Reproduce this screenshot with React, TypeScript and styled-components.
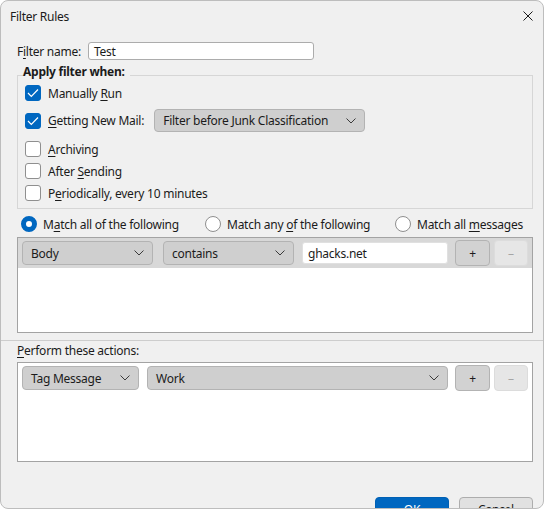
import React from 'react';
import styled, { createGlobalStyle } from 'styled-components';

const GlobalStyle = createGlobalStyle`
  html, body {
    margin: 0;
    padding: 0;
    background: #ffffff;
  }
  body {
    font-family: "Noto Sans", "Open Sans", sans-serif;
    font-size: 12px;
    letter-spacing: -0.25px;
    color: #1b1b1b;
  }
  * {
    box-sizing: border-box;
  }
`;

const Window = styled.div`
  width: 544px;
  height: 509px;
  border: 1px solid #bdbdbd;
  border-radius: 8px;
  background: #f0f0f0;
  overflow: hidden;
  display: flex;
  flex-direction: column;
`;

const TitleBar = styled.div`
  height: 30px;
  flex: none;
  display: flex;
  align-items: center;
  justify-content: space-between;
  padding: 0 10px 0 9px;
`;

const Pane = styled.div<{ $top: number; $bottom?: number }>`
  padding: ${(p) => p.$top}px 10px ${(p) => p.$bottom ?? 0}px 16px;
  display: flex;
  flex-direction: column;
`;

const Key = styled.span`
  text-decoration: underline;
  text-underline-offset: 2px;
`;

const NameRow = styled.div`
  display: flex;
  align-items: center;
  height: 18px;
`;

const NameLabel = styled.label`
  width: 71px;
`;

const TextBox = styled.div<{ $w: number; $h: number; $ml?: number; $soft?: boolean }>`
  width: ${(p) => p.$w}px;
  height: ${(p) => p.$h}px;
  margin-left: ${(p) => p.$ml ?? 0}px;
  flex: none;
  background: #ffffff;
  border: 1px solid ${(p) => (p.$soft ? '#e0e0e0' : '#acacac')};
  border-radius: 3px;
  padding: 0 5px;
  display: flex;
  align-items: center;
`;

const Group = styled.fieldset`
  margin: 4px 0 0 0;
  padding: 0 7px 4px 7px;
  border: 1px solid #d6d6d6;
  min-inline-size: 0;
`;

const Legend = styled.legend`
  font-weight: 700;
  line-height: 16px;
  padding: 0 5px 6px 0;
  margin-left: -2px;
`;

const CheckRow = styled.div<{ $mt?: number; $h?: number }>`
  display: flex;
  align-items: center;
  gap: 7px;
  height: ${(p) => p.$h ?? 22}px;
  margin-top: ${(p) => p.$mt ?? 0}px;
`;

const Box = styled.span<{ $on?: boolean }>`
  width: 16px;
  height: 16px;
  flex: none;
  border-radius: 3px;
  background: ${(p) => (p.$on ? '#0067c0' : '#ffffff')};
  border: 1px solid ${(p) => (p.$on ? '#0067c0' : '#8f8f8f')};
  display: flex;
  align-items: center;
  justify-content: center;
`;

const Select = styled.div<{ $w: number; $h?: number; $ml?: number }>`
  width: ${(p) => p.$w}px;
  height: ${(p) => p.$h ?? 24}px;
  margin-left: ${(p) => p.$ml ?? 0}px;
  flex: none;
  background: #cfcfcf;
  border: 1px solid #b3b3b3;
  border-radius: 4px;
  padding: 0 8px 0 8px;
  display: flex;
  align-items: center;
  justify-content: space-between;
`;

const RadioRow = styled.div`
  display: grid;
  grid-template-columns: 184px 190px auto;
  align-items: center;
  height: 20px;
  margin: 5px 0 0 4px;
`;

const RadioItem = styled.div`
  display: flex;
  align-items: center;
  gap: 6px;
`;

const Radio = styled.span<{ $on?: boolean }>`
  width: 16px;
  height: 16px;
  border-radius: 50%;
  flex: none;
  background: #ffffff;
  border: ${(p) => (p.$on ? '5px solid #0067c0' : '1px solid #8f8f8f')};
`;

const List = styled.div<{ $h: number; $mt: number }>`
  height: ${(p) => p.$h}px;
  margin-top: ${(p) => p.$mt}px;
  background: #ffffff;
  border: 1px solid #a3a3a3;
`;

const ListRow = styled.div<{ $band?: boolean }>`
  height: ${(p) => (p.$band ? 30 : 26)}px;
  margin-top: ${(p) => (p.$band ? 0 : 2)}px;
  background: ${(p) => (p.$band ? '#d8d8d8' : 'transparent')};
  padding: 0 4px;
  display: flex;
  align-items: center;
`;

const SmallButton = styled.div<{ $off?: boolean; $ml: number }>`
  width: ${(p) => (p.$off ? 34 : 35)}px;
  height: 26px;
  margin-left: ${(p) => p.$ml}px;
  flex: none;
  border-radius: 4px;
  background: ${(p) => (p.$off ? '#e6e6e6' : '#d2d2d2')};
  border: 1px solid ${(p) => (p.$off ? '#dcdcdc' : '#b3b3b3')};
  color: ${(p) => (p.$off ? '#a5a5a5' : '#1b1b1b')};
  display: flex;
  align-items: center;
  justify-content: center;
  font-size: 12px;
`;

const Splitter = styled.div`
  height: 1px;
  flex: none;
  background: #cdcdcd;
`;

const SectionLabel = styled.div`
  line-height: 16px;
`;

const Footer = styled.div`
  display: flex;
  justify-content: flex-end;
  gap: 10px;
  margin-top: 35px;
`;

const DialogButton = styled.div<{ $primary?: boolean }>`
  width: 74px;
  height: 24px;
  border-radius: 4px;
  background: ${(p) => (p.$primary ? '#0067c0' : '#e1e1e1')};
  border: 1px solid ${(p) => (p.$primary ? '#0060b4' : '#adadad')};
  color: ${(p) => (p.$primary ? '#ffffff' : '#1b1b1b')};
  display: flex;
  align-items: center;
  justify-content: center;
`;

const Chevron = () => (
  <svg width="10" height="6" viewBox="0 0 10 6">
    <path d="M0.5 0.5 L5 5 L9.5 0.5" stroke="#3a3a3a" fill="none" strokeWidth="1" />
  </svg>
);

const Check = () => (
  <svg width="12" height="10" viewBox="0 0 12 10">
    <path d="M1 5 L4.3 8.3 L11 1.5" stroke="#ffffff" fill="none" strokeWidth="1.2" />
  </svg>
);

const CloseIcon = () => (
  <svg width="10" height="10" viewBox="0 0 10 10">
    <path d="M0.5 0.5 L9.5 9.5 M9.5 0.5 L0.5 9.5" stroke="#1b1b1b" strokeWidth="1" />
  </svg>
);

const App = () => (
  <>
    <GlobalStyle />
    <Window>
      <TitleBar>
        <span>Filter Rules</span>
        <CloseIcon />
      </TitleBar>

      <Pane $top={11} $bottom={7}>
        <NameRow>
          <NameLabel>
            F<Key>i</Key>lter name:
          </NameLabel>
          <TextBox $w={226} $h={18}>Test</TextBox>
        </NameRow>

        <Group>
          <Legend>Apply filter when:</Legend>
          <CheckRow $mt={-4}>
            <Box $on>
              <Check />
            </Box>
            <span>
              Manually <Key>R</Key>un
            </span>
          </CheckRow>
          <CheckRow $mt={5} $h={23}>
            <Box $on>
              <Check />
            </Box>
            <span>
              <Key>G</Key>etting New Mail:
            </span>
            <Select $w={211} $h={23} $ml={3}>
              <span>Filter before Junk Classification</span>
              <Chevron />
            </Select>
          </CheckRow>
          <CheckRow $mt={6}>
            <Box />
            <span>
              <Key>A</Key>rchiving
            </span>
          </CheckRow>
          <CheckRow>
            <Box />
            <span>
              After <Key>S</Key>ending
            </span>
          </CheckRow>
          <CheckRow>
            <Box />
            <span>
              P<Key>e</Key>riodically, every 10 minutes
            </span>
          </CheckRow>
        </Group>

        <RadioRow>
          <RadioItem>
            <Radio $on />
            <span>
              M<Key>a</Key>tch all of the following
            </span>
          </RadioItem>
          <RadioItem>
            <Radio />
            <span>
              Match any <Key>o</Key>f the following
            </span>
          </RadioItem>
          <RadioItem>
            <Radio />
            <span>
              Match all <Key>m</Key>essages
            </span>
          </RadioItem>
        </RadioRow>

        <List $h={96} $mt={3}>
          <ListRow $band>
            <Select $w={131}>
              <span>Body</span>
              <Chevron />
            </Select>
            <Select $w={131} $ml={10}>
              <span>contains</span>
              <Chevron />
            </Select>
            <TextBox $w={146} $h={22} $ml={8} $soft>
              ghacks.net
            </TextBox>
            <SmallButton $ml={7}>+</SmallButton>
            <SmallButton $ml={4} $off>
              –
            </SmallButton>
          </ListRow>
        </List>
      </Pane>

      <Splitter />

      <Pane $top={2}>
        <SectionLabel>
          <Key>P</Key>erform these actions:
        </SectionLabel>
        <List $h={100} $mt={3}>
          <ListRow>
            <Select $w={117}>
              <span>Tag Message</span>
              <Chevron />
            </Select>
            <Select $w={301} $ml={8}>
              <span>Work</span>
              <Chevron />
            </Select>
            <SmallButton $ml={7}>+</SmallButton>
            <SmallButton $ml={4} $off>
              –
            </SmallButton>
          </ListRow>
        </List>
        <Footer>
          <DialogButton $primary>OK</DialogButton>
          <DialogButton>Cancel</DialogButton>
        </Footer>
      </Pane>
    </Window>
  </>
);

export default App;
